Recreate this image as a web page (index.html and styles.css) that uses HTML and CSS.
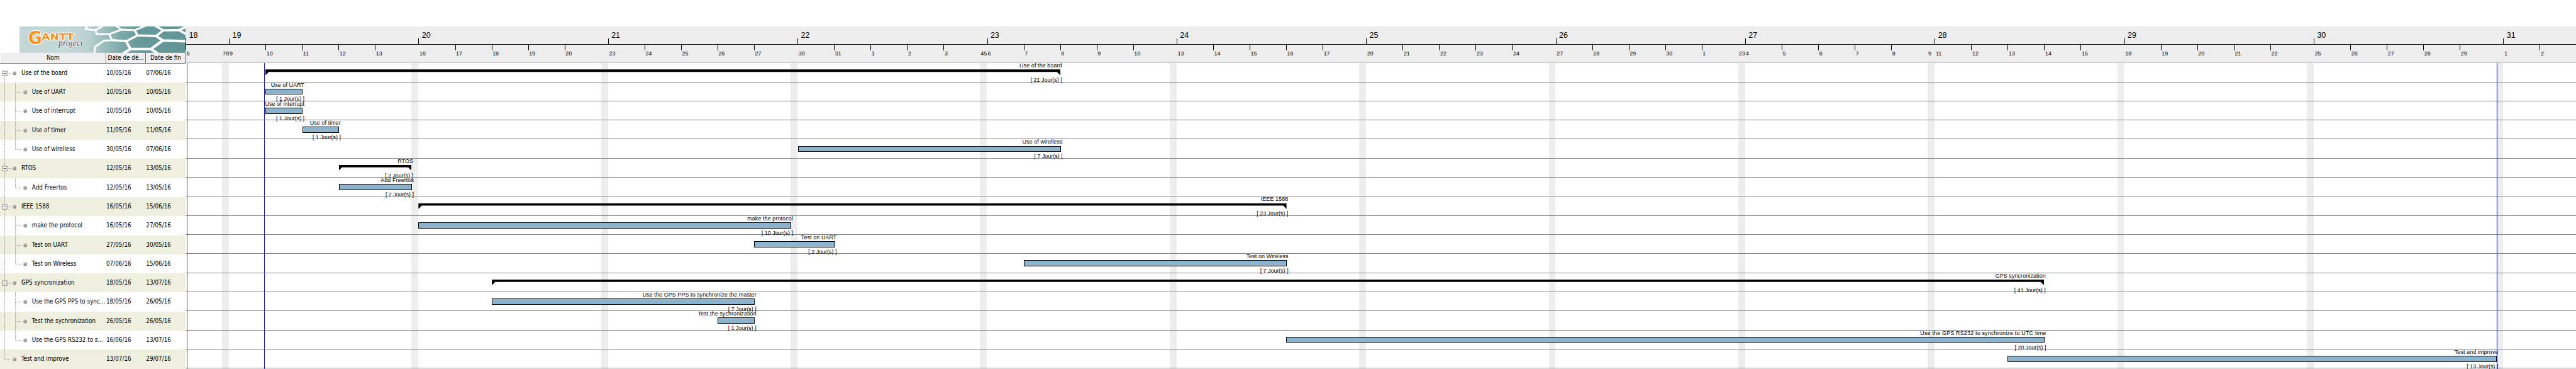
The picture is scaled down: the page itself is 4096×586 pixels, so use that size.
FILE: index.html
```html
<!DOCTYPE html>
<html lang="fr">
<head>
<meta charset="utf-8">
<title>GanttProject</title>
<link rel="stylesheet" href="styles.css">
</head>
<body>
<svg class="defs" aria-hidden="true">
  <radialGradient id="dot" cx=".4" cy=".35" r=".7"><stop offset="0" stop-color="#c4c4c4"/><stop offset="1" stop-color="#7c7c7c"/></radialGradient>
  <symbol id="toggle"><path class="link" d="M14 17.5H20"/><rect x="4.5" y="13.5" width="8" height="8" fill="#fff" stroke="#77776c"/><path d="M6.3 17.5h4.6" stroke="#222"/><circle cx="26" cy="17.3" r="3.2" fill="url(#dot)"/></symbol>
  <symbol id="first"><path class="link" d="M8.5 22V34"/><use href="#toggle"/></symbol>
  <symbol id="group"><path class="link" d="M8.5 0V34"/><use href="#toggle"/></symbol>
  <symbol id="mid"><path class="link" d="M8.5 0V34M27.5 0V34M28 17.5H37"/><circle cx="45" cy="17.3" r="3.2" fill="url(#dot)"/></symbol>
  <symbol id="end"><path class="link" d="M8.5 0V34M27.5 0V17.5H37"/><circle cx="45" cy="17.3" r="3.2" fill="url(#dot)"/></symbol>
  <symbol id="last"><path class="link" d="M8.5 0V17.5H19"/><circle cx="26" cy="17.3" r="3.2" fill="url(#dot)"/></symbol>
</svg>
<main class="app">
  <section class="table">
    <svg class="banner" viewBox="105 141 888 141" preserveAspectRatio="none">
      <defs>
        <linearGradient id="teal" gradientUnits="userSpaceOnUse" x1="105" y1="0" x2="993" y2="0"><stop offset="0" stop-color="#c1d5d4"/><stop offset=".28" stop-color="#c6d9d9"/><stop offset=".42" stop-color="#b9d0d0"/><stop offset=".6" stop-color="#80abab"/><stop offset=".72" stop-color="#669999"/><stop offset="1" stop-color="#629696"/></linearGradient>
      </defs>
      <rect x="105" y="141" width="888" height="141" fill="url(#teal)"/>
      <g class="mesh">
        <path stroke-width="10" d="M468 138L458 156L512 160L518 183L584 182L650 158L622 138M512 160L552 138M650 158L722 161L778 138M584 182L600 214L555 218L510 250L506 284"/>
        <path stroke-width="12" d="M722 161L736 189L676 220L600 214M736 189L836 192L874 162L832 138M874 162L958 160L998 142M958 160L998 184"/>
        <path stroke-width="14" d="M676 220L698 262L658 286M698 262L808 262L872 216L836 192M872 216L998 220M808 262L846 286"/>
      </g>
      <g class="logo">
        <text class="logo-name" x="151" y="234" font-size="98" textLength="74" lengthAdjust="spacingAndGlyphs">G</text>
        <text class="logo-name" x="224" y="213" font-size="50" textLength="172" lengthAdjust="spacingAndGlyphs">ANTT</text>
        <text class="logo-sub" x="314" y="247" font-size="46" textLength="130" lengthAdjust="spacingAndGlyphs">project</text>
      </g>
    </svg>
    <div class="thead"><span class="th">Nom</span><span class="th">Date de dé...</span><span class="th">Date de fin</span></div>
    <div class="tr"><svg class="tree" viewBox="0 0 57 34"><use href="#first"/></svg><span class="name group">Use of the board</span><span class="date">10/05/16</span><span class="date">07/06/16</span></div>
    <div class="tr"><svg class="tree" viewBox="0 0 57 34"><use href="#mid"/></svg><span class="name">Use of UART</span><span class="date">10/05/16</span><span class="date">10/05/16</span></div>
    <div class="tr"><svg class="tree" viewBox="0 0 57 34"><use href="#mid"/></svg><span class="name">Use of interrupt</span><span class="date">10/05/16</span><span class="date">10/05/16</span></div>
    <div class="tr"><svg class="tree" viewBox="0 0 57 34"><use href="#mid"/></svg><span class="name">Use of timer</span><span class="date">11/05/16</span><span class="date">11/05/16</span></div>
    <div class="tr"><svg class="tree" viewBox="0 0 57 34"><use href="#end"/></svg><span class="name">Use of wirelless</span><span class="date">30/05/16</span><span class="date">07/06/16</span></div>
    <div class="tr"><svg class="tree" viewBox="0 0 57 34"><use href="#group"/></svg><span class="name group">RTOS</span><span class="date">12/05/16</span><span class="date">13/05/16</span></div>
    <div class="tr"><svg class="tree" viewBox="0 0 57 34"><use href="#end"/></svg><span class="name">Add Freertos</span><span class="date">12/05/16</span><span class="date">13/05/16</span></div>
    <div class="tr"><svg class="tree" viewBox="0 0 57 34"><use href="#group"/></svg><span class="name group">IEEE 1588</span><span class="date">16/05/16</span><span class="date">15/06/16</span></div>
    <div class="tr"><svg class="tree" viewBox="0 0 57 34"><use href="#mid"/></svg><span class="name">make the protocol</span><span class="date">16/05/16</span><span class="date">27/05/16</span></div>
    <div class="tr"><svg class="tree" viewBox="0 0 57 34"><use href="#mid"/></svg><span class="name">Test on UART</span><span class="date">27/05/16</span><span class="date">30/05/16</span></div>
    <div class="tr"><svg class="tree" viewBox="0 0 57 34"><use href="#end"/></svg><span class="name">Test on Wireless</span><span class="date">07/06/16</span><span class="date">15/06/16</span></div>
    <div class="tr"><svg class="tree" viewBox="0 0 57 34"><use href="#group"/></svg><span class="name group">GPS syncronization</span><span class="date">18/05/16</span><span class="date">13/07/16</span></div>
    <div class="tr"><svg class="tree" viewBox="0 0 57 34"><use href="#mid"/></svg><span class="name">Use the GPS PPS to sync...</span><span class="date">18/05/16</span><span class="date">26/05/16</span></div>
    <div class="tr"><svg class="tree" viewBox="0 0 57 34"><use href="#mid"/></svg><span class="name">Test the sychronization</span><span class="date">26/05/16</span><span class="date">26/05/16</span></div>
    <div class="tr"><svg class="tree" viewBox="0 0 57 34"><use href="#end"/></svg><span class="name">Use the GPS RS232 to s...</span><span class="date">16/06/16</span><span class="date">13/07/16</span></div>
    <div class="tr"><svg class="tree" viewBox="0 0 57 34"><use href="#last"/></svg><span class="name group">Test and improve</span><span class="date">13/07/16</span><span class="date">29/07/16</span></div>
  </section>

  <section class="chart">
    <header class="scale">
      <div class="week short"><b>18</b><div class="days"><i>6</i><i class="we">78</i></div></div>
      <div class="week"><b>19</b><div class="days tight"><i>9</i><i>10</i><i>11</i><i>12</i><i>13</i></div></div>
      <div class="week"><b>20</b><div class="days"><i>16</i><i>17</i><i>18</i><i>19</i><i>20</i></div></div>
      <div class="week"><b>21</b><div class="days"><i>23</i><i>24</i><i>25</i><i>26</i><i>27</i></div></div>
      <div class="week"><b>22</b><div class="days"><i>30</i><i>31</i><i>1</i><i>2</i><i>3</i><i class="we">45</i></div></div>
      <div class="week"><b>23</b><div class="days tight"><i>6</i><i>7</i><i>8</i><i>9</i><i>10</i></div></div>
      <div class="week"><b>24</b><div class="days"><i>13</i><i>14</i><i>15</i><i>16</i><i>17</i></div></div>
      <div class="week"><b>25</b><div class="days"><i>20</i><i>21</i><i>22</i><i>23</i><i>24</i></div></div>
      <div class="week"><b>26</b><div class="days"><i>27</i><i>28</i><i>29</i><i>30</i><i>1</i><i class="we">23</i></div></div>
      <div class="week"><b>27</b><div class="days tight"><i>4</i><i>5</i><i>6</i><i>7</i><i>8</i><i class="we">9</i></div></div>
      <div class="week"><b>28</b><div class="days"><i>11</i><i>12</i><i>13</i><i>14</i><i>15</i></div></div>
      <div class="week"><b>29</b><div class="days"><i>18</i><i>19</i><i>20</i><i>21</i><i>22</i></div></div>
      <div class="week"><b>30</b><div class="days"><i>25</i><i>26</i><i>27</i><i>28</i><i>29</i></div></div>
      <div class="week"><b>31</b><div class="days"><i>1</i><i>2</i></div></div>
    </header>
    <div class="plot">
      <div class="row"><div class="task sum" style="--s:473.4;--e:1891"><span>Use of the board</span><div class="bar"></div><span class="dur">[ 21 Jour(s) ]</span></div></div>
      <div class="row"><div class="task" style="--s:473.4;--e:540"><span>Use of UART</span><div class="bar"></div><span class="dur">[ 1 Jour(s) ]</span></div></div>
      <div class="row"><div class="task" style="--s:473.4;--e:540"><span>Use of interrupt</span><div class="bar"></div><span class="dur">[ 1 Jour(s) ]</span></div></div>
      <div class="row"><div class="task" style="--s:539;--e:604.9"><span>Use of timer</span><div class="bar"></div><span class="dur">[ 1 Jour(s) ]</span></div></div>
      <div class="row"><div class="task" style="--s:1423;--e:1892"><span>Use of wirelless</span><div class="bar"></div><span class="dur">[ 7 Jour(s) ]</span></div></div>
      <div class="row"><div class="task sum" style="--s:604;--e:734"><span>RTOS</span><div class="bar"></div><span class="dur">[ 2 Jour(s) ]</span></div></div>
      <div class="row"><div class="task" style="--s:604;--e:735"><span>Add Freertos</span><div class="bar"></div><span class="dur">[ 2 Jour(s) ]</span></div></div>
      <div class="row"><div class="task sum" style="--s:746.2;--e:2294.3"><span>IEEE 1588</span><div class="bar"></div><span class="dur">[ 23 Jour(s) ]</span></div></div>
      <div class="row"><div class="task" style="--s:746.2;--e:1411.2"><span>make the protocol</span><div class="bar"></div><span class="dur">[ 10 Jour(s) ]</span></div></div>
      <div class="row"><div class="task" style="--s:1345.2;--e:1489.2"><span>Test on UART</span><div class="bar"></div><span class="dur">[ 2 Jour(s) ]</span></div></div>
      <div class="row"><div class="task" style="--s:1826.2;--e:2294.8"><span>Test on Wireless</span><div class="bar"></div><span class="dur">[ 7 Jour(s) ]</span></div></div>
      <div class="row"><div class="task sum" style="--s:877.2;--e:3645.3"><span>GPS syncronization</span><div class="bar"></div><span class="dur">[ 41 Jour(s) ]</span></div></div>
      <div class="row"><div class="task" style="--s:877.2;--e:1346"><span>Use the GPS PPS to synchronize the master</span><div class="bar"></div><span class="dur">[ 7 Jour(s) ]</span></div></div>
      <div class="row"><div class="task" style="--s:1280.2;--e:1346"><span>Test the sychronization</span><div class="bar"></div><span class="dur">[ 1 Jour(s) ]</span></div></div>
      <div class="row"><div class="task" style="--s:2294.2;--e:3646.1"><span class="wide">Use the GPS RS232 to synchronize to UTC time</span><div class="bar"></div><span class="dur">[ 20 Jour(s) ]</span></div></div>
      <div class="row"><div class="task" style="--s:3580.2;--e:4452.3"><span>Test and improve</span><div class="bar"></div><span class="dur">[ 13 Jour(s) ]</span></div></div>
      <div class="marker today" style="--x:333"></div>
      <div class="marker" style="--x:471"></div>
      <div class="marker" style="--x:4452.9"></div>
    </div>
  </section>
</main>
</body>
</html>
```
FILE: styles.css
```css
/* --u is one unit of the 4594-unit-wide drawing */
:root { --u: calc(100vw / 4594); }
* { box-sizing: border-box; }
body { margin: 0; background: #fff; overflow: hidden; color: #000; }
.defs { position: absolute; width: 0; height: 0; }
.app {
  display: flex;
  width: 100vw;
  height: 100vh;
  padding-top: calc(47 * var(--u));
  overflow: hidden;
}

/* task table */
.table {
  width: calc(331 * var(--u));
  flex: none;
  font-family: "DejaVu Sans Condensed", "DejaVu Sans", sans-serif;
  font-stretch: condensed;
  font-size: calc(11 * var(--u));
  white-space: nowrap;
}
.banner {
  display: block;
  width: calc(296 * var(--u));
  height: calc(47 * var(--u));
  margin-left: calc(35 * var(--u));
}
.mesh { fill: none; stroke: #fff; }
.logo { stroke: #fff; stroke-width: 8; stroke-linejoin: round; }
.logo text { paint-order: stroke; }
.logo-name { font-family: "DejaVu Sans", sans-serif; font-weight: 700; fill: #f7931e; }
.logo .logo-sub { font-family: "Liberation Serif", serif; font-style: italic; fill: #4c4c58; stroke-width: 5; }
.thead {
  display: grid;
  grid-template-columns: 189fr 71fr 71fr;
  height: calc(19 * var(--u));
  background: #eee;
  border-bottom: 1px solid #666;
}
.th {
  text-align: center;
  line-height: calc(18.5 * var(--u));
  border-right: 1px solid #666;
  border-left: 1px solid #fff;
}
.tr {
  display: flex;
  height: calc(34 * var(--u));
  line-height: calc(34 * var(--u));
}
.tr:nth-child(even) { background: #efefdf; }
.tree { flex: none; width: calc(57 * var(--u)); height: 100%; }
.link { fill: none; stroke: #808078; stroke-width: 1; stroke-dasharray: 1 1; }
.name { width: calc(122 * var(--u)); flex: none; }
.name.group { margin-left: calc(-19 * var(--u)); width: calc(141 * var(--u)); }
.date { width: calc(55 * var(--u)); text-align: right; }
.date:last-child { width: calc(71 * var(--u)); }

/* time scale */
.chart {
  width: calc(4263 * var(--u));
  flex: none;
  font-family: "Liberation Sans", Arial, sans-serif;
  font-size: calc(10 * var(--u));
}
.scale {
  display: flex;
  height: calc(65 * var(--u));
  overflow: hidden;
  background: #ededed;
  border-bottom: 1px solid #c4c4c4;
}
.week { flex: none; width: calc(338 * var(--u)); }
.week.short { width: calc(77.4 * var(--u)); }
.week b {
  display: flex;
  align-items: flex-end;
  height: calc(33 * var(--u));
  padding: 0 0 calc(7.4 * var(--u)) calc(6 * var(--u));
  font-weight: 400;
  font-size: calc(14 * var(--u));
  line-height: calc(15 * var(--u));
  border-bottom: 1px solid #000;
  background: linear-gradient(#000, #000) left bottom / 1px calc(11 * var(--u)) no-repeat;
}
.days { display: flex; }
.days i {
  flex: none;
  width: calc(65.1 * var(--u));
  height: calc(31 * var(--u));
  padding: calc(10.7 * var(--u)) 0 0 calc(1.8 * var(--u));
  font-style: normal;
  line-height: calc(11 * var(--u));
  background: linear-gradient(#000, #000) left top / 1px calc(10 * var(--u)) no-repeat;
}
.week:not(.short) i:first-child, .days .we { background: none; }
.tight i:first-child { padding-left: calc(1 * var(--u)); }
.days .we { width: calc(12.3 * var(--u)); padding-left: calc(1 * var(--u)); letter-spacing: calc(.2 * var(--u)); }

/* plot: one row per task, weekend stripes behind */
.plot {
  position: relative;
  height: calc(545 * var(--u));
  padding-top: calc(.4 * var(--u));
  background: repeating-linear-gradient(90deg, #ededed 0 calc(12.2 * var(--u)), transparent calc(12.2 * var(--u)) calc(338 * var(--u))) calc(65.2 * var(--u)) 0 / calc(100% + 338 * var(--u)) 100% no-repeat;
}
.row {
  display: flex;
  height: calc(34 * var(--u));
  background: linear-gradient(#808080, #808080) left bottom / 100% 1px no-repeat;
}
.task {
  flex: none;
  display: flex;
  flex-direction: column;
  width: calc((var(--e) - var(--s)) * var(--u));
  margin-left: calc((var(--s) - 331) * var(--u));
  white-space: nowrap;
}
.task span {
  align-self: flex-end;
  margin-right: calc(-3 * var(--u));
  height: calc(11.4 * var(--u));
  flex: none;
  line-height: calc(9.9 * var(--u));
  letter-spacing: calc(.12 * var(--u));
}
.task .wide { letter-spacing: calc(.22 * var(--u)); }
.task .dur { margin-top: calc(3.5 * var(--u)); line-height: calc(10 * var(--u)); letter-spacing: 0; }
.bar {
  flex: none;
  height: calc(10.9 * var(--u));
  background: #8cb5cd;
  border: 1px solid #000;
}
.sum .bar {
  border: 0;
  background: #000;
  clip-path: polygon(0 0, 100% 0, 100% 95%, calc(100% - 6 * var(--u)) 40%, calc(6 * var(--u)) 40%, 0 95%);
}
.marker {
  position: absolute;
  top: 0;
  bottom: 0;
  left: calc((var(--x) - 331) * var(--u));
  width: 1px;
  background: #1c1c9c;
}
.marker.today { background: #b22424; }
```
